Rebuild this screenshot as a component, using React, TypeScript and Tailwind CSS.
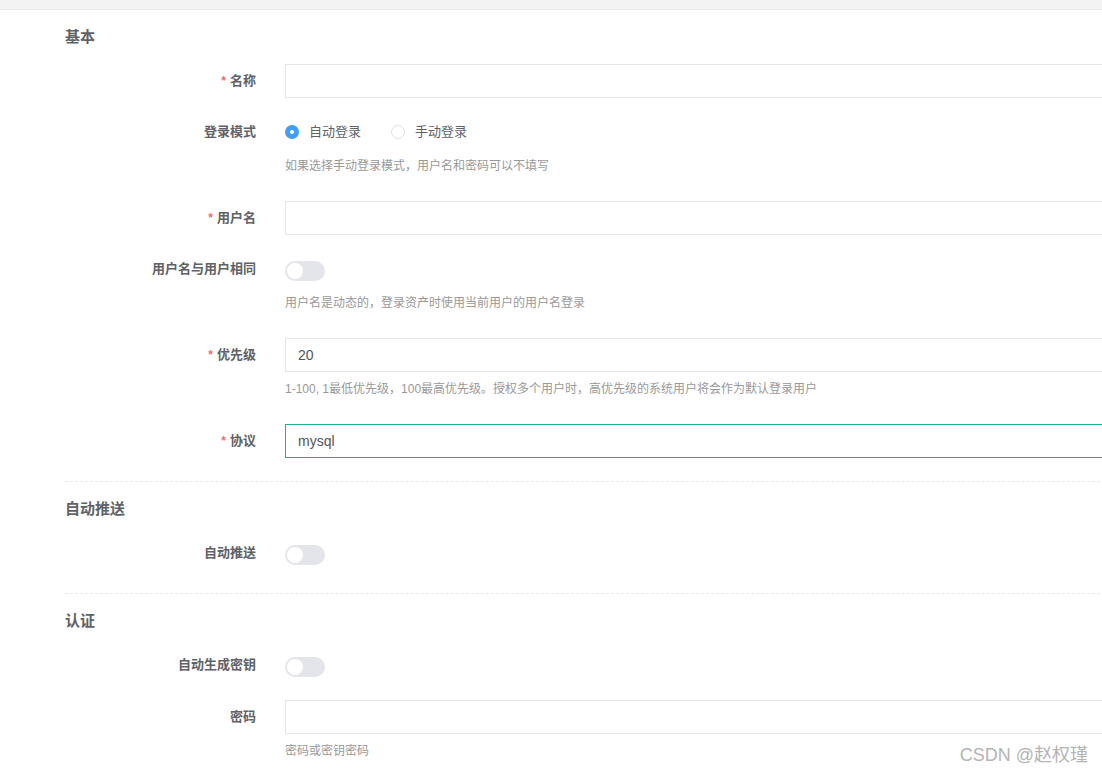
import React from "react";

const font = {
  fontFamily: '"Liberation Sans", Arial, "Noto Sans CJK SC", sans-serif',
};

function Label({ text, required }: { text: string; required?: boolean }) {
  return (
    <div className="w-[220px] shrink-0 pr-[29px] h-[34px] flex items-center justify-end text-[13px] font-bold text-[#606266]">
      {required && <span className="text-[#f56c6c] mr-[4px] text-[12px]">*</span>}
      <span>{text}</span>
    </div>
  );
}

function Help({ children }: { children: React.ReactNode }) {
  return <div className="mt-[8px] mb-[9px] text-[12px] leading-[18px] text-[#999999]">{children}</div>;
}

function TextInput({ value, active }: { value?: string; active?: boolean }) {
  return (
    <div
      className={
        "h-[34px] w-full border bg-white px-[12px] flex items-center text-[14px] text-[#555] " +
        (active ? "border-[#1ab394]" : "border-[#e5e6e7]")
      }
    >
      {value}
    </div>
  );
}

function Switch() {
  return (
    <div className="h-[34px] flex items-center pt-[4px]">
      <div className="w-[40px] h-[20px] rounded-full bg-[#e4e5ea] relative">
        <div className="absolute left-[2px] top-[2px] w-[16px] h-[16px] rounded-full bg-white" />
      </div>
    </div>
  );
}

function Radio({ checked, label }: { checked?: boolean; label: string }) {
  return (
    <div className="flex items-center mr-[30px]">
      {checked ? (
        <span className="w-[14px] h-[14px] rounded-full bg-[#409eff] flex items-center justify-center">
          <span className="w-[4px] h-[4px] rounded-full bg-white" />
        </span>
      ) : (
        <span className="w-[14px] h-[14px] rounded-full border border-[#dcdfe6] bg-white" />
      )}
      <span className="ml-[10px] text-[13px] text-[#606266]">{label}</span>
    </div>
  );
}

function Item({
  label,
  required,
  help,
  children,
}: {
  label: string;
  required?: boolean;
  help?: string;
  children: React.ReactNode;
}) {
  return (
    <div className="flex mb-[17px]">
      <Label text={label} required={required} />
      <div className="flex-1">
        {children}
        {help && <Help>{help}</Help>}
      </div>
    </div>
  );
}

function Heading({ text }: { text: string }) {
  return <div className="h-[20px] leading-[20px] text-[15px] font-bold text-[#606266] mb-[17px]">{text}</div>;
}

function Divider() {
  return <div className="mt-[23px] mb-[17px] border-t border-dashed border-[#e8e8e8]" />;
}

export default function App() {
  return (
    <div className="w-[1102px] h-[775px] overflow-hidden bg-white relative" style={font}>
      <div className="h-[10px] bg-[#f3f3f4] border-b border-[#e7eaec]" />
      <div className="w-[1160px] pl-[65px] pt-[17px]">
        <Heading text="基本" />
        <Item label="名称" required>
          <TextInput />
        </Item>
        <Item label="登录模式" help="如果选择手动登录模式，用户名和密码可以不填写">
          <div className="h-[34px] flex items-center">
            <Radio checked label="自动登录" />
            <Radio label="手动登录" />
          </div>
        </Item>
        <Item label="用户名" required>
          <TextInput />
        </Item>
        <Item label="用户名与用户相同" help="用户名是动态的，登录资产时使用当前用户的用户名登录">
          <Switch />
        </Item>
        <Item
          label="优先级"
          required
          help="1-100, 1最低优先级，100最高优先级。授权多个用户时，高优先级的系统用户将会作为默认登录用户"
        >
          <TextInput value="20" />
        </Item>
        <Item label="协议" required>
          <TextInput value="mysql" active />
        </Item>
        <Divider />
        <Heading text="自动推送" />
        <Item label="自动推送">
          <Switch />
        </Item>
        <Divider />
        <Heading text="认证" />
        <div className="mb-[18px] flex">
          <Label text="自动生成密钥" />
          <Switch />
        </div>
        <Item label="密码" help="密码或密钥密码">
          <TextInput />
        </Item>
      </div>
      <div className="absolute right-[14px] bottom-[6px] text-[18px] text-[#b4b4b4]" style={font}>
        CSDN @赵权瑾
      </div>
    </div>
  );
}
